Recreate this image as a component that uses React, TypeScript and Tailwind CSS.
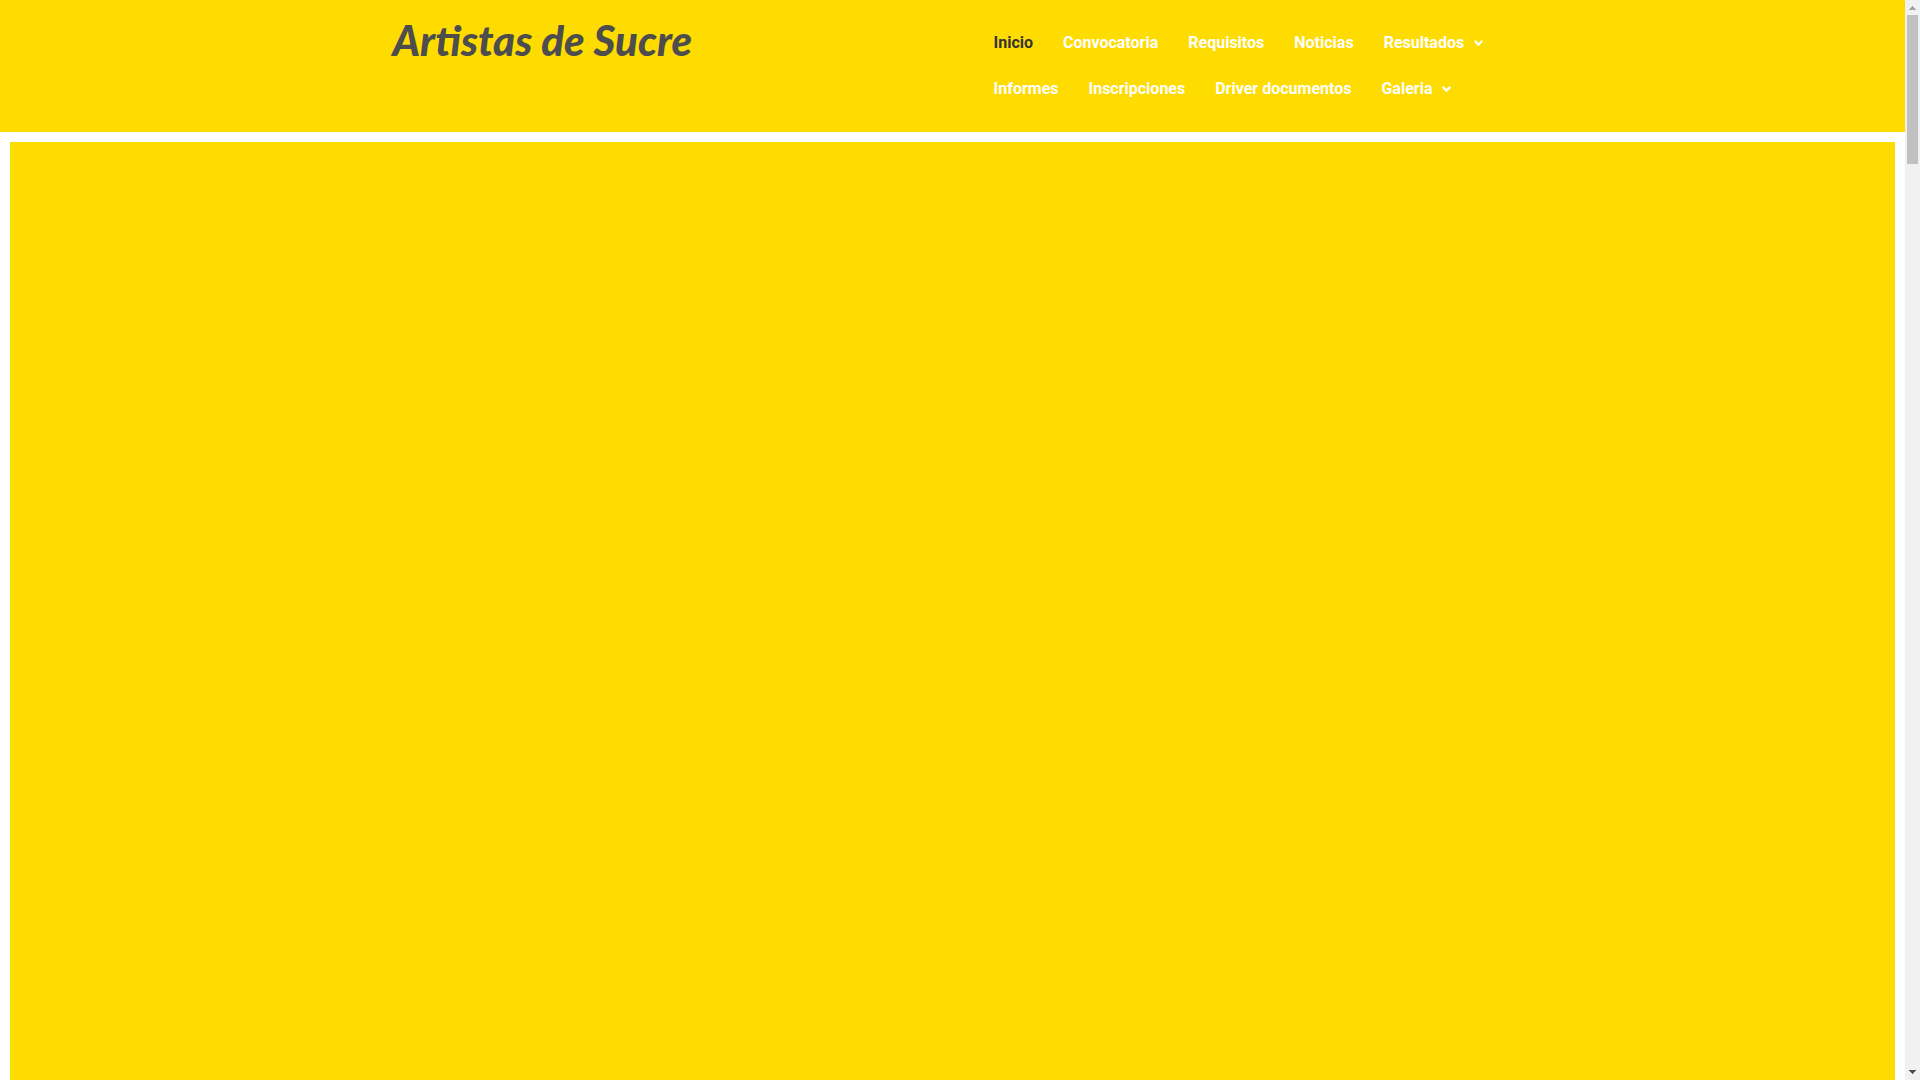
import { clsx } from "clsx";

interface MenuItem {
  label: string;
  href: string;
  active?: boolean;
  submenu?: boolean;
}

const menu: MenuItem[] = [
  { label: "Inicio", href: "#inicio", active: true },
  { label: "Convocatoria", href: "#convocatoria" },
  { label: "Requisitos", href: "#requisitos" },
  { label: "Noticias", href: "#noticias" },
  { label: "Resultados", href: "#resultados", submenu: true },
  { label: "Informes", href: "#informes" },
  { label: "Inscripciones", href: "#inscripciones" },
  { label: "Driver documentos", href: "#documentos" },
  { label: "Galeria", href: "#galeria", submenu: true },
];

function SubmenuArrow() {
  return (
    <svg
      className="ml-2.5 h-3 w-2.5"
      viewBox="0 0 10 12"
      fill="none"
      stroke="currentColor"
      strokeWidth="2.2"
      aria-hidden="true"
    >
      <path d="M.7 3.8l3.8 3.8 3.8-3.8" />
    </svg>
  );
}

function Header() {
  return (
    <header className="bg-[#ffdc00] py-5">
      <div className="mx-auto grid max-w-[1140px] grid-cols-1 px-2.5 lg:grid-cols-2">
        <a
          href="#inicio"
          className="self-start font-['Lato',sans-serif] text-[42px] leading-10 font-black whitespace-nowrap text-[#4d4d4d] italic"
        >
          Artistas de Sucre
        </a>
        <nav className="lg:pl-[26px]">
          <ul className="flex flex-wrap">
            {menu.map((item) => (
              <li key={item.label}>
                <a
                  href={item.href}
                  className={clsx(
                    "flex h-[46px] items-center px-[15px] text-base font-bold",
                    item.active ? "text-[#333333]" : "text-white",
                  )}
                >
                  {item.label}
                  {item.submenu && <SubmenuArrow />}
                </a>
              </li>
            ))}
          </ul>
        </nav>
      </div>
    </header>
  );
}

function ScrollRail() {
  return (
    <div
      className="flex w-[15px] shrink-0 flex-col items-center bg-[#f1f1f1]"
      aria-hidden="true"
    >
      <svg className="h-[15px] w-[15px]" viewBox="0 0 15 15" fill="#a3a3a3">
        <path d="M4 10V9h1V8h1V7h1V6h1v1h1v1h1v1h1v1z" />
      </svg>
      <div className="h-[149px] w-[11px] bg-[#c1c1c1]" />
      <svg
        className="mt-auto h-[15px] w-[15px]"
        viewBox="0 0 15 15"
        fill="#505050"
      >
        <path d="M4 5v1h1v1h1v1h1v1h1V8h1V7h1V6h1V5z" />
      </svg>
    </div>
  );
}

export default function App() {
  return (
    <div className="flex h-screen bg-white font-['Roboto',sans-serif]">
      <div className="flex min-w-0 flex-1 flex-col overflow-hidden">
        <Header />
        <main className="flex flex-1 px-2.5 pt-2.5">
          <section className="flex-1 bg-[#ffdc00]" />
        </main>
      </div>
      <ScrollRail />
    </div>
  );
}
